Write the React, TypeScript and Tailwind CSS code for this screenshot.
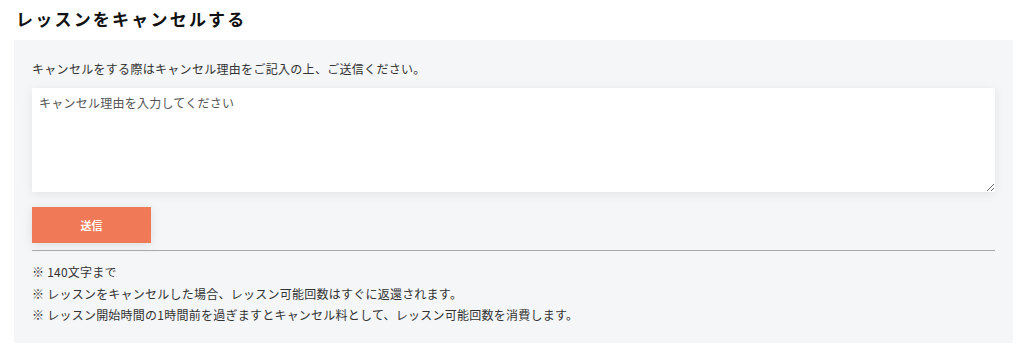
import React from 'react';

const App: React.FC = () => {
    return (
        <div className="w-[1024px] h-[354px] bg-white text-[#111] font-['Noto_Sans_CJK_JP','Noto_Sans',sans-serif]">
            <h2 className="px-4 pt-[6px] h-[40px] text-[17px] leading-[26px] font-bold tracking-[0.13em]">レッスンをキャンセルする</h2>
            <div className="ml-[14px] mr-[11px] bg-[#f5f6f8] px-[18px] pt-[19px] pb-[17px]">
                <p className="text-[12px] leading-[20px] text-[#333] tracking-[0.025em] mb-[9px]">キャンセルをする際はキャンセル理由をご記入の上、ご送信ください。</p>
                <textarea
                    className="block w-full h-[104px] bg-white px-[7px] py-[6px] text-[12px] leading-[18px] tracking-[0.02em] text-[#333] placeholder:text-[#555] shadow-[0_2px_10px_rgba(0,0,0,0.08)] outline-none"
                    placeholder="キャンセル理由を入力してください"
                />
                <button className="mt-[15px] w-[119px] h-[36px] bg-[#f07a57] text-white text-[11px] font-bold shadow-[0_2px_10px_rgba(0,0,0,0.1)]">送信</button>
                <hr className="mt-[7px] border-0 h-[1px] bg-[#a9a9a9]" />
                <ul className="mt-[10px] text-[12px] leading-[21.5px] tracking-[0.02em] text-[#333]">
                    <li>※ 140文字まで</li>
                    <li>※ レッスンをキャンセルした場合、レッスン可能回数はすぐに返還されます。</li>
                    <li>※ レッスン開始時間の1時間前を過ぎますとキャンセル料として、レッスン可能回数を消費します。</li>
                </ul>
            </div>
        </div>
    );
};

export default App;
